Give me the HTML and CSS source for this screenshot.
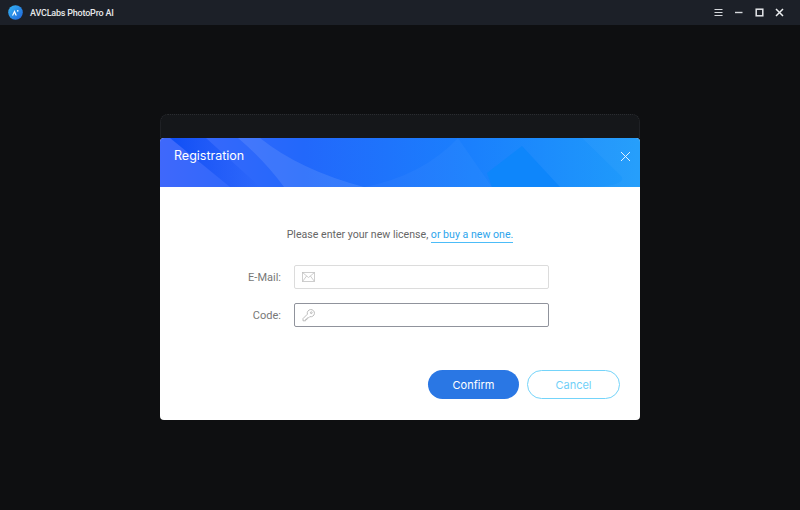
FILE: index.html
```html
<!DOCTYPE html>
<html lang="en">

<head>
    <meta charset="UTF-8" />
    <title>AVCLabs PhotoPro AI</title>
    <link rel="stylesheet" href="styles.css">
</head>

<body>
    <header class="titlebar">
        <svg class="logo" width="15" height="15" viewBox="0 0 16 16">
            <defs>
                <linearGradient id="logoFill" x1="0" y1="0" x2="1" y2="1">
                    <stop offset="0" stop-color="#35b6f5" />
                    <stop offset="1" stop-color="#1f62d8" />
                </linearGradient>
            </defs>
            <circle cx="8" cy="8" r="7.8" fill="url(#logoFill)" />
            <path d="M4.2 11.2 L7 5.4 L9.4 11.2 L8 11.2 L6.8 8.6 L5.6 11.2 Z" fill="#fff" />
            <circle cx="10.4" cy="6.2" r="0.9" fill="#fff" />
        </svg>
        <span class="app-name">AVCLabs PhotoPro AI</span>
        <div class="window-controls">
            <svg width="9" height="9" viewBox="0 0 9 9" stroke="#d5d8dc" stroke-width="1.2" fill="none">
                <path d="M0.5 1.5H8.5M0.5 4.5H8.5M0.5 7.5H8.5" />
            </svg>
            <svg width="9" height="9" viewBox="0 0 9 9" stroke="#d5d8dc" stroke-width="1.4" fill="none">
                <path d="M1 4.5H8.5" />
            </svg>
            <svg width="9" height="9" viewBox="0 0 9 9" stroke="#e4e6e9" stroke-width="1.5" fill="none">
                <rect x="1.2" y="1.2" width="6.6" height="6.6" />
            </svg>
            <svg width="9" height="9" viewBox="0 0 9 9" stroke="#eceef0" stroke-width="1.5" fill="none">
                <path d="M1 1L8 8M8 1L1 8" />
            </svg>
        </div>
    </header>

    <main class="stage">
        <div class="panel">
            <div class="panel-top"></div>
            <section class="dialog" role="dialog" aria-label="Registration">
                <div class="dialog-head">
                    <svg class="head-art" width="480" height="49" viewBox="0 0 480 49" preserveAspectRatio="none">
                        <defs>
                            <linearGradient id="headFill" x1="0" y1="0" x2="1" y2="0">
                                <stop offset="0" stop-color="#3f68fb" />
                                <stop offset="0.3" stop-color="#2268fb" />
                                <stop offset="0.65" stop-color="#1a80fd" />
                                <stop offset="1" stop-color="#1f9cfb" />
                            </linearGradient>
                            <linearGradient id="wedgeFill" x1="0" y1="0" x2="1" y2="0">
                                <stop offset="0" stop-color="#0f4ff5" stop-opacity="1" />
                                <stop offset="1" stop-color="#0f4ff5" stop-opacity="0" />
                            </linearGradient>
                        </defs>
                        <rect width="480" height="49" fill="url(#headFill)" />
                        <path d="M10 0 L46 0 L100 49 L70 49 Z" fill="url(#wedgeFill)" />
                        <path d="M78 0 L100 0 Q140 32 204 49 L124 49 Q104 22 78 0 Z" fill="#fff" opacity="0.1" />
                        <path d="M204 49 Q262 38 298 0 L332 49 Z" fill="#fff" opacity="0.03" />
                        <path d="M327 35 L362 8 L400 49 L332 49 Z" fill="#0e86fb" />
                        <path d="M422 0 L480 0 L480 49 L436 49 Q470 46 460 37 Z" fill="#fff" opacity="0.03" />
                    </svg>
                    <h1>Registration</h1>
                    <svg class="head-close" width="11" height="11" viewBox="0 0 11 11" stroke="#e4f2ff" stroke-width="1" fill="none">
                        <path d="M1 1L10 10M10 1L1 10" />
                    </svg>
                </div>

                <div class="dialog-body">
                    <p class="prompt">Please enter your new license, <a class="buy-link">or buy a new one.</a></p>

                    <form class="fields" autocomplete="off">
                        <label class="field">
                            <span class="field-label">E-Mail:</span>
                            <span class="input-box">
                                <svg width="13" height="10" viewBox="0 0 13 10" stroke="#c2c2c2" stroke-width="0.8" fill="none">
                                    <rect x="0.5" y="0.5" width="12" height="9" />
                                    <path d="M0.5 0.5L6.5 5.5L12.5 0.5M0.5 9.5L4.6 4M12.5 9.5L8.4 4" />
                                </svg>
                            </span>
                        </label>
                        <label class="field">
                            <span class="field-label">Code:</span>
                            <span class="input-box input-focus">
                                <svg width="13" height="13" viewBox="0 0 13 13" stroke="#b4b4b4" stroke-width="0.9" fill="none">
                                    <path d="M5.4 5.2A3.6 3.6 0 1 1 7.8 7.6L6.4 9H5V10.4H3.6V11.8H1V9.6Z" />
                                    <circle cx="9.3" cy="3.7" r="0.9" />
                                </svg>
                            </span>
                        </label>
                    </form>

                    <div class="actions">
                        <button type="button" class="btn btn-confirm">Confirm</button>
                        <button type="button" class="btn btn-cancel">Cancel</button>
                    </div>
                </div>
            </section>
        </div>
    </main>
</body>

</html>
```

FILE: styles.css
```css
html,
body {
    height: 100%;
}

body {
    margin: 0;
    display: flex;
    flex-direction: column;
    background-color: #0e0f11;
    font-family: "Roboto", "Liberation Sans", sans-serif;
    overflow: hidden;
}

.titlebar {
    height: 25px;
    flex: none;
    display: flex;
    align-items: center;
    padding: 0 16px 0 8px;
    background-color: #1c2028;
    color: #e6e8ea;
}

.logo {
    margin-right: 7px;
}

.app-name {
    font-size: 9px;
    font-weight: 500;
    letter-spacing: -0.2px;
}

.window-controls {
    margin-left: auto;
    display: flex;
    align-items: center;
    gap: 11.5px;
}

.stage {
    flex: 1;
    display: flex;
    justify-content: center;
    align-items: center;
    padding-bottom: 1px;
}

.panel {
    width: 480px;
}

.panel-top {
    height: 24px;
    box-sizing: border-box;
    border: 1px dotted #2a2c30;
    border-bottom: none;
    border-radius: 8px 8px 0 0;
    background-color: #15171a;
}

.dialog {
    height: 282px;
    display: flex;
    flex-direction: column;
    border-radius: 4px;
    overflow: hidden;
    background-color: #fff;
}

.dialog-head {
    position: relative;
    height: 49px;
    box-sizing: border-box;
    flex: none;
    display: flex;
    align-items: center;
    justify-content: space-between;
    padding: 0 9px 13px 14px;
    color: #fff;
}

.head-art {
    position: absolute;
    left: 0;
    top: 0;
}

.dialog-head h1,
.head-close {
    position: relative;
}

.dialog-head h1 {
    margin: 0 0 1px 0;
    font-family: "Inter", "Liberation Sans", sans-serif;
    font-size: 12.5px;
    font-weight: 400;
}

.dialog-body {
    flex: 1;
    display: flex;
    flex-direction: column;
    align-items: center;
}

.prompt {
    margin: 40px 0 0 0;
    font-size: 10.6px;
    line-height: 16px;
    color: #666;
}

.buy-link {
    display: inline-block;
    color: #2da5ec;
    line-height: 15px;
    border-bottom: 1px solid #4cbcf8;
}

.fields {
    align-self: flex-start;
    margin: 22px 0 0 69px;
    display: flex;
    flex-direction: column;
    gap: 14px;
}

.field {
    display: flex;
    align-items: center;
    gap: 13px;
}

.field-label {
    width: 52px;
    text-align: right;
    font-size: 11px;
    color: #777;
}

.input-box {
    width: 255px;
    height: 24px;
    box-sizing: border-box;
    display: flex;
    align-items: center;
    padding-left: 7px;
    border: 1px solid #dcdcdc;
    border-radius: 2px;
}

.input-focus {
    border-color: #90939c;
}

.actions {
    margin: 43px 20px 0 auto;
    display: flex;
    gap: 8px;
}

.btn {
    height: 29px;
    border-radius: 15px;
    padding: 0;
    font-family: "Inter", "Liberation Sans", sans-serif;
    font-size: 11px;
    cursor: pointer;
}

.btn-confirm {
    width: 91px;
    border: none;
    background-color: #2a77e4;
    color: #fff;
}

.btn-cancel {
    width: 93px;
    border: 1px solid #74d4fa;
    background-color: #fff;
    color: #71d0f8;
}
```
